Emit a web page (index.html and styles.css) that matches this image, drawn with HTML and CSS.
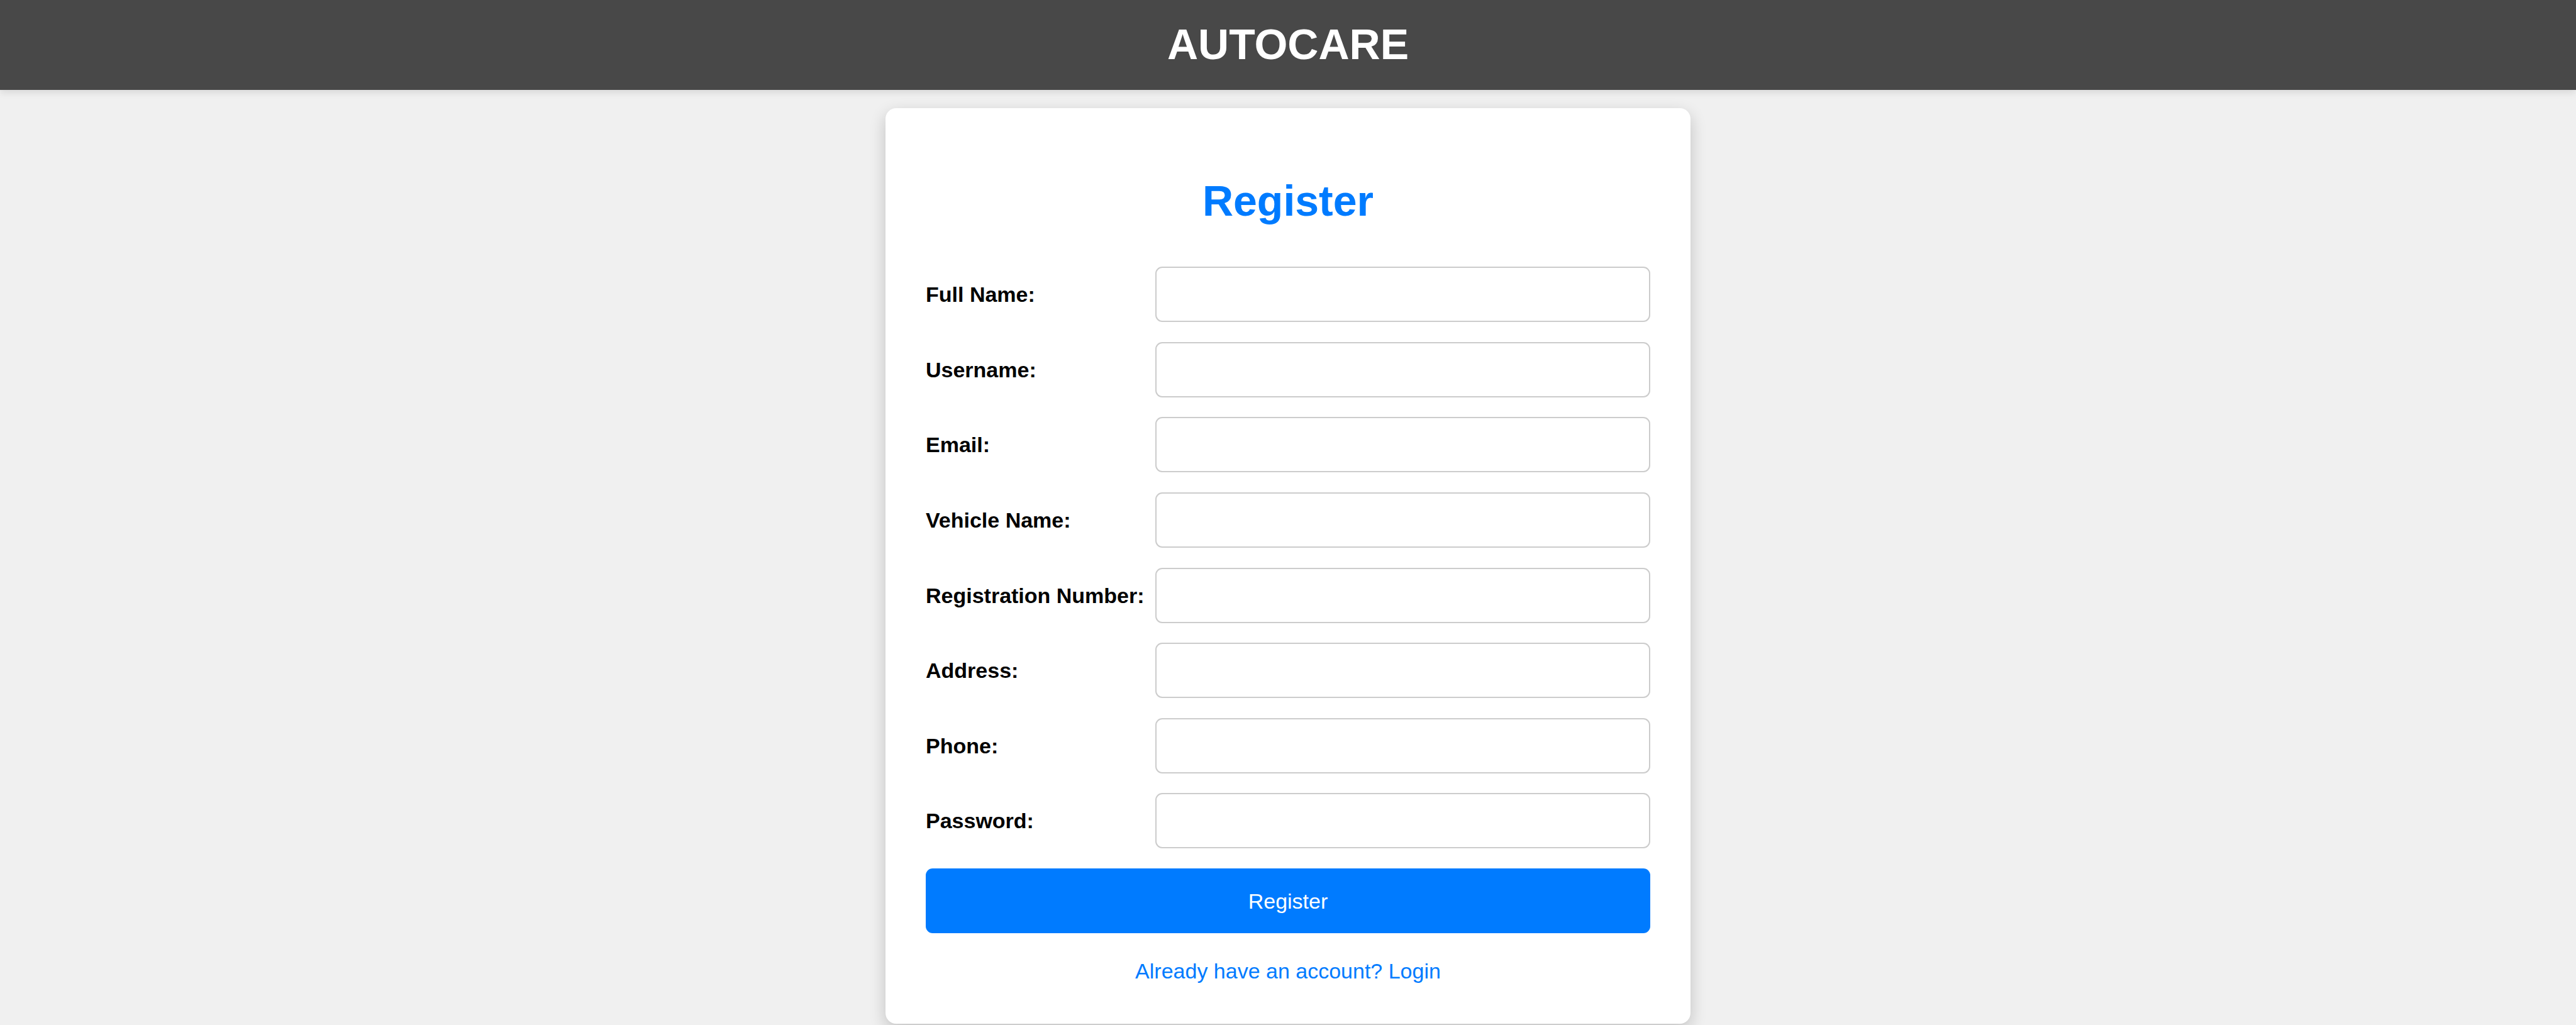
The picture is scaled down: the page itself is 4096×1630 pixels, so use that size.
FILE: index.html
```
<!DOCTYPE html>
<html lang="en">
<head>
  <meta charset="utf-8">
  <meta name="viewport" content="width=device-width, initial-scale=1">
  <title>AUTOCARE - Register</title>
  <link rel="stylesheet" href="styles.css">
</head>
<body>
  <header class="site-header">
    <h1 class="brand">AUTOCARE</h1>
  </header>
  <main class="page">
    <section class="card">
      <h2 class="card-title">Register</h2>
      <form class="form">
        <div class="field">
          <label class="label" for="fullname">Full Name:</label>
          <input class="input" type="text" id="fullname" name="fullname">
        </div>
        <div class="field">
          <label class="label" for="username">Username:</label>
          <input class="input" type="text" id="username" name="username">
        </div>
        <div class="field">
          <label class="label" for="email">Email:</label>
          <input class="input" type="email" id="email" name="email">
        </div>
        <div class="field">
          <label class="label" for="vehicle">Vehicle Name:</label>
          <input class="input" type="text" id="vehicle" name="vehicle">
        </div>
        <div class="field">
          <label class="label" for="registration">Registration Number:</label>
          <input class="input" type="text" id="registration" name="registration">
        </div>
        <div class="field">
          <label class="label" for="address">Address:</label>
          <input class="input" type="text" id="address" name="address">
        </div>
        <div class="field">
          <label class="label" for="phone">Phone:</label>
          <input class="input" type="tel" id="phone" name="phone">
        </div>
        <div class="field">
          <label class="label" for="password">Password:</label>
          <input class="input" type="password" id="password" name="password">
        </div>
        <button class="submit" type="submit">Register</button>
      </form>
      <a class="login-link" href="#login">Already have an account? Login</a>
    </section>
  </main>
</body>
</html>
```
FILE: styles.css
```
* {
  box-sizing: border-box;
}

body {
  display: flex;
  flex-direction: column;
  min-height: 100vh;
  margin: 0;
  background: #f0f0f0;
  color: #000;
  font-family: "Liberation Sans", Arial, sans-serif;
  font-size: 34px;
  line-height: 40px;
}

.site-header {
  padding: 31px 32px 33px;
  background: #484848;
  box-shadow: 0 4px 11px rgba(0, 0, 0, 0.1);
  color: #fff;
  text-align: center;
}

.brand,
.card-title {
  margin: 0;
  font-size: 68px;
  line-height: 79px;
}

.page {
  display: flex;
  flex: 1;
  justify-content: center;
  padding: 29px 0 2px;
}

.card {
  display: flex;
  flex-direction: column;
  width: 100%;
  max-width: 1280px;
  padding: 64px;
  border-radius: 17px;
  background: #fff;
  box-shadow: 0 9px 26px rgba(0, 0, 0, 0.2);
}

.card-title {
  margin: 44px 0 65px;
  color: #007bff;
  text-align: center;
}

.form {
  display: flex;
  flex: 1;
  flex-direction: column;
  justify-content: space-between;
  gap: 31px;
}

.field {
  display: grid;
  grid-template-columns: 365px 1fr;
  align-items: center;
}

.label {
  font-weight: bold;
}

.input {
  width: 100%;
  height: 88px;
  padding: 21px;
  border: 2px solid #ccc;
  border-radius: 11px;
  background: #fff;
  font: inherit;
}

.submit {
  min-height: 103px;
  padding: 30px;
  border: 0;
  border-radius: 11px;
  background: #007bff;
  color: #fff;
  font: inherit;
  cursor: pointer;
}

.login-link {
  align-self: center;
  margin-top: 41px;
  color: #007bff;
  line-height: 39px;
  text-decoration: none;
}
```
